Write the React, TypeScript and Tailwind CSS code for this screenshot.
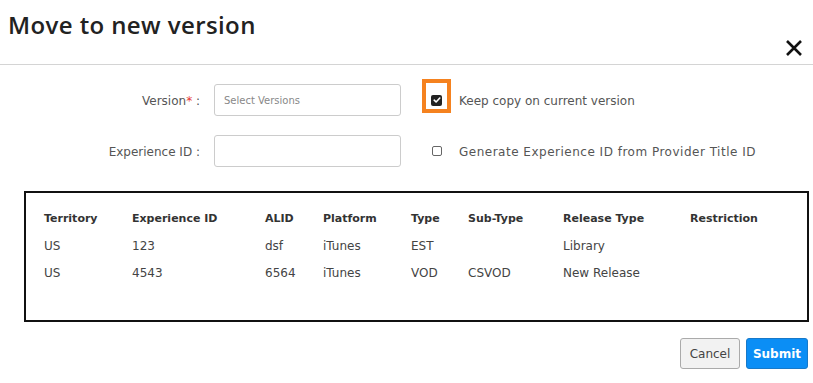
import React from 'react';

// Rows shown in the "move" preview table
const columns = [
  { key: 'territory', label: 'Territory', w: 'w-[88px]' },
  { key: 'experienceId', label: 'Experience ID', w: 'w-[133px]' },
  { key: 'alid', label: 'ALID', w: 'w-[58px]' },
  { key: 'platform', label: 'Platform', w: 'w-[88px]' },
  { key: 'type', label: 'Type', w: 'w-[57px]' },
  { key: 'subType', label: 'Sub-Type', w: 'w-[95px]' },
  { key: 'releaseType', label: 'Release Type', w: 'w-[127px]' },
  { key: 'restriction', label: 'Restriction', w: 'w-[110px]' },
];

const rows: Record<string, string>[] = [
  { territory: 'US', experienceId: '123', alid: 'dsf', platform: 'iTunes', type: 'EST', subType: '', releaseType: 'Library', restriction: '' },
  { territory: 'US', experienceId: '4543', alid: '6564', platform: 'iTunes', type: 'VOD', subType: 'CSVOD', releaseType: 'New Release', restriction: '' },
];

const Checkbox = ({ checked }: { checked: boolean }) =>
  checked ? (
    <span className="w-[11px] h-[11px] rounded-[2px] bg-[#222] flex items-center justify-center">
      <svg width="8" height="8" viewBox="0 0 8 8" fill="none">
        <path d="M1.2 4.2 L3.1 6 L6.8 2" stroke="#fff" strokeWidth="1.6" strokeLinecap="round" strokeLinejoin="round" />
      </svg>
    </span>
  ) : (
    <span className="w-[10px] h-[10px] rounded-[2px] border border-[#666] bg-white" />
  );

export default function App() {
  return (
    <div className="w-[813px] h-[383px] bg-white overflow-hidden" style={{ fontFamily: '"DejaVu Sans", sans-serif' }}>
      {/* Header */}
      <div className="h-[65px] border-b border-[#d4d4d4] flex justify-between">
        <h2 className="pl-[8px] pt-[9px] text-[24px] font-semibold text-[#222] leading-[32px] tracking-[0.4px]" style={{ fontFamily: '"Open Sans", sans-serif' }}>
          Move to new version
        </h2>
        <button className="mr-[9px] mt-[38px] w-[20px] h-[20px] flex items-center justify-center">
          <svg width="18" height="18" viewBox="0 0 18 18">
            <path d="M2 2 L16 16 M16 2 L2 16" stroke="#111" strokeWidth="2.6" />
          </svg>
        </button>
      </div>

      {/* Form */}
      <div className="flex flex-col gap-[19px] pt-[19px] text-[12px] text-[#555]">
        <div className="flex items-center h-[32px]">
          <label className="w-[200px] text-right pt-[1px]">
            Version<span className="text-[#e53935]">*</span> :
          </label>
          <div className="ml-[14px] w-[187px] h-[32px] border border-[#ccc] rounded-[3px] flex items-center pl-[9px] text-[10px] text-[#888]">
            Select Versions
          </div>
          <span className="relative ml-[21px] w-[29px] h-[32px] flex items-center justify-center">
            <Checkbox checked />
            <span className="absolute left-0 top-[-5px] w-[29px] h-[34px] border-[4px] border-[#f5821f]" />
          </span>
          <span className="ml-[8px] pt-[1px]">Keep copy on current version</span>
        </div>
        <div className="flex items-center h-[32px]">
          <label className="w-[200px] text-right pt-[1px]">Experience ID :</label>
          <div className="ml-[14px] w-[187px] h-[32px] border border-[#ccc] rounded-[3px]" />
          <span className="ml-[21px] w-[29px] h-[32px] flex items-center justify-center">
            <Checkbox checked={false} />
          </span>
          <span className="ml-[8px] pt-[1px] tracking-[0.5px]">Generate Experience ID from Provider Title ID</span>
        </div>
      </div>

      {/* Table */}
      <div className="mx-[24px] w-[785px] mt-[24px] h-[131px] border-[2px] border-[#111] pl-[18px] pt-[14px]">
        <table className="text-[12px] border-collapse">
          <thead>
            <tr className="h-[25px]">
              {columns.map((c) => (
                <th key={c.key} className={`${c.w} text-left text-[11px] font-bold text-[#333] p-0`}>{c.label}</th>
              ))}
            </tr>
          </thead>
          <tbody>
            {rows.map((r, i) => (
              <tr key={i} className={i === 0 ? 'h-[27px]' : 'h-[28px]'}>
                {columns.map((c) => (
                  <td key={c.key} className="p-0 text-[#444]">{r[c.key]}</td>
                ))}
              </tr>
            ))}
          </tbody>
        </table>
      </div>

      {/* Footer */}
      <div className="flex justify-end gap-[6px] pr-[5px] mt-[16px]">
        <button className="w-[60px] h-[31px] rounded-[3px] border border-[#aaa] bg-[#f2f2f2] text-[12px] text-[#444]">
          Cancel
        </button>
        <button className="w-[62px] h-[31px] rounded-[3px] border border-[#1779c9] bg-[#0b8ef5] text-[12px] font-bold text-white">
          Submit
        </button>
      </div>
    </div>
  );
}
